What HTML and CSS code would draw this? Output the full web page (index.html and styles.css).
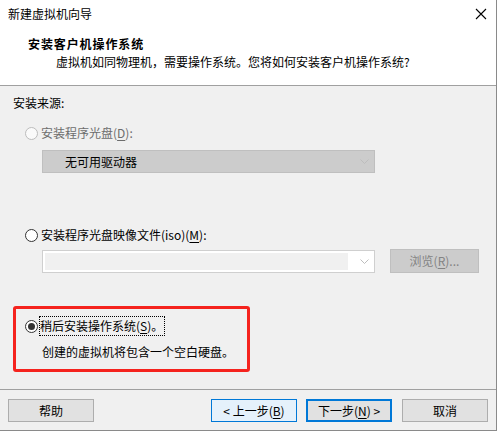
FILE: index.html
```html
<!DOCTYPE html>
<html>
<head>
<meta charset="utf-8">
<link rel="stylesheet" href="styles.css">
</head>
<body>
<div class="window">
  <div class="header">
    <div class="titlebar">
      <span class="title">新建虚拟机向导</span>
      <svg class="close" width="12" height="12" viewBox="0 0 12 12"><path d="M1 1 L11 11 M11 1 L1 11" stroke="#000" stroke-width="1.1" fill="none"/></svg>
    </div>
    <div class="h-title">安装客户机操作系统</div>
    <div class="h-sub">虚拟机如同物理机，需要操作系统。您将如何安装客户机操作系统?</div>
  </div>
  <div class="content">
    <div class="section-label">安装来源:</div>
    <div class="option opt-disc disabled"><span class="radio"></span><span class="label">安装程序光盘(<u>D</u>):</span></div>
    <div class="select">
      <span class="select-text">无可用驱动器</span>
      <svg class="chev" width="9" height="6" viewBox="0 0 9 6"><path d="M0.5 0.5 L4.5 4.5 L8.5 0.5" stroke="#bdbdbd" stroke-width="1" fill="none"/></svg>
    </div>
    <div class="option opt-iso"><span class="radio"></span><span class="label">安装程序光盘映像文件(iso)(<u>M</u>):</span></div>
    <div class="iso-row">
      <div class="combo">
        <div class="combo-field"></div>
        <svg class="chev" width="9" height="6" viewBox="0 0 9 6"><path d="M0.5 0.5 L4.5 4.5 L8.5 0.5" stroke="#bdbdbd" stroke-width="1" fill="none"/></svg>
      </div>
      <div class="btn-browse">浏览(<u>R</u>)...</div>
    </div>
    <div class="later-box">
      <div class="option opt-later"><span class="radio checked"></span><span class="label focus">稍后安装操作系统(<u>S</u>)。</span></div>
      <div class="desc">创建的虚拟机将包含一个空白硬盘。</div>
    </div>
  </div>
  <div class="footer">
    <div class="btn">帮助</div>
    <div class="spacer"></div>
    <div class="btn btn-prev">&lt; 上一步(<u>B</u>)</div>
    <div class="btn btn-next">下一步(<u>N</u>) &gt;</div>
    <div class="btn btn-cancel">取消</div>
  </div>
</div>
</body>
</html>
```

FILE: styles.css
```css
html, body {
  margin: 0;
  padding: 0;
  background: #ffffff;
}
body {
  font-family: "Noto Sans CJK SC", "Microsoft YaHei", sans-serif;
  font-size: 12px;
  color: #000;
}
.window {
  width: 497px;
  height: 431px;
  box-sizing: border-box;
  border-right: 1px solid #8a8a8a;
  border-bottom: 1px solid #8a8a8a;
  background: #f0f0f0;
  display: flex;
  flex-direction: column;
}
.header {
  background: #fff;
  height: 86px;
  box-sizing: border-box;
  border-bottom: 1px solid #a0a0a0;
}
.titlebar {
  height: 27px;
  display: flex;
  align-items: center;
  padding-left: 8px;
  padding-right: 9px;
}
.title {
  flex: 1;
  line-height: 16px;
}
.close {
  display: block;
  margin-top: 0px;
}
.h-title {
  margin-top: 9px;
  padding-left: 28px;
  line-height: 16px;
  font-weight: bold;
  letter-spacing: 0.9px;
}
.h-sub {
  margin-top: 2px;
  padding-left: 56px;
  line-height: 16px;
}
.content {
  height: 304px;
  box-sizing: border-box;
  padding-top: 9px;
  border-bottom: 1px solid #a0a0a0;
}
.section-label {
  margin-left: 13px;
  line-height: 16px;
}
.option {
  display: flex;
  align-items: center;
  height: 16px;
  margin-left: 25px;
}
.label {
  margin-left: 3px;
  line-height: 16px;
}
.radio {
  width: 13px;
  height: 13px;
  box-sizing: border-box;
  border: 1px solid #333;
  border-radius: 50%;
  background: #fff;
  flex: none;
  display: flex;
  align-items: center;
  justify-content: center;
}
.radio.checked::after {
  content: "";
  width: 7px;
  height: 7px;
  border-radius: 50%;
  background: #333;
}
.disabled .radio {
  border-color: #bcbcbc;
  background: #fafafa;
}
.disabled .label {
  color: #6d6d6d;
}
.opt-disc {
  margin-top: 14px;
}
.select {
  margin-top: 9px;
  margin-left: 42px;
  width: 333px;
  height: 23px;
  box-sizing: border-box;
  background: #cccccc;
  border: 1px solid #bfbfbf;
  display: flex;
  align-items: center;
  padding-left: 22px;
  padding-right: 5px;
}
.select-text {
  flex: 1;
  line-height: 16px;
}
.chev {
  display: block;
  flex: none;
}
.opt-iso {
  margin-top: 54px;
}
.iso-row {
  margin-top: 6px;
  margin-left: 42px;
  display: flex;
  align-items: flex-end;
  height: 24px;
}
.combo {
  width: 333px;
  height: 23px;
  box-sizing: border-box;
  border: 1px solid #cfcfcf;
  background: #fff;
  display: flex;
  align-items: center;
  padding: 2px 5px 2px 2px;
}
.combo-field {
  width: 310px;
  height: 17px;
  background: #f0f0f0;
  margin-right: 12px;
}
.btn-browse {
  margin-left: 15px;
  width: 89px;
  height: 24px;
  box-sizing: border-box;
  background: #cccccc;
  border: 1px solid #bfbfbf;
  color: #838383;
  display: flex;
  align-items: center;
  justify-content: center;
  line-height: 16px;
}
.later-box {
  margin-top: 33px;
  margin-left: 13px;
  width: 237px;
  height: 66px;
  box-sizing: border-box;
  border: 3px solid #f5231e;
  border-radius: 3px;
  padding-top: 9px;
  padding-left: 9px;
}
.opt-later {
  margin-left: 0;
}
.focus {
  outline: 1px dotted #000;
  outline-offset: 0px;
  padding: 1px 1px 1px 0;
  margin-left: 2px;
}
.desc {
  margin-top: 10px;
  margin-left: 17px;
  line-height: 16px;
}
.footer {
  flex: 1;
  display: flex;
  align-items: flex-start;
  padding: 9px 8px 0 8px;
}
.spacer {
  flex: 1;
}
.btn {
  width: 86px;
  height: 23px;
  box-sizing: border-box;
  background: #e1e1e1;
  border: 1px solid #adadad;
  display: flex;
  align-items: center;
  justify-content: center;
  line-height: 16px;
}
.btn-prev {
  background: #e5f1fb;
  border-color: #0078d7;
}
.btn-next {
  margin-left: 9px;
  border: 2px solid #0078d7;
}
.btn-cancel {
  margin-left: 10px;
}
u {
  text-decoration: underline;
  text-underline-offset: 2px;
}
```
